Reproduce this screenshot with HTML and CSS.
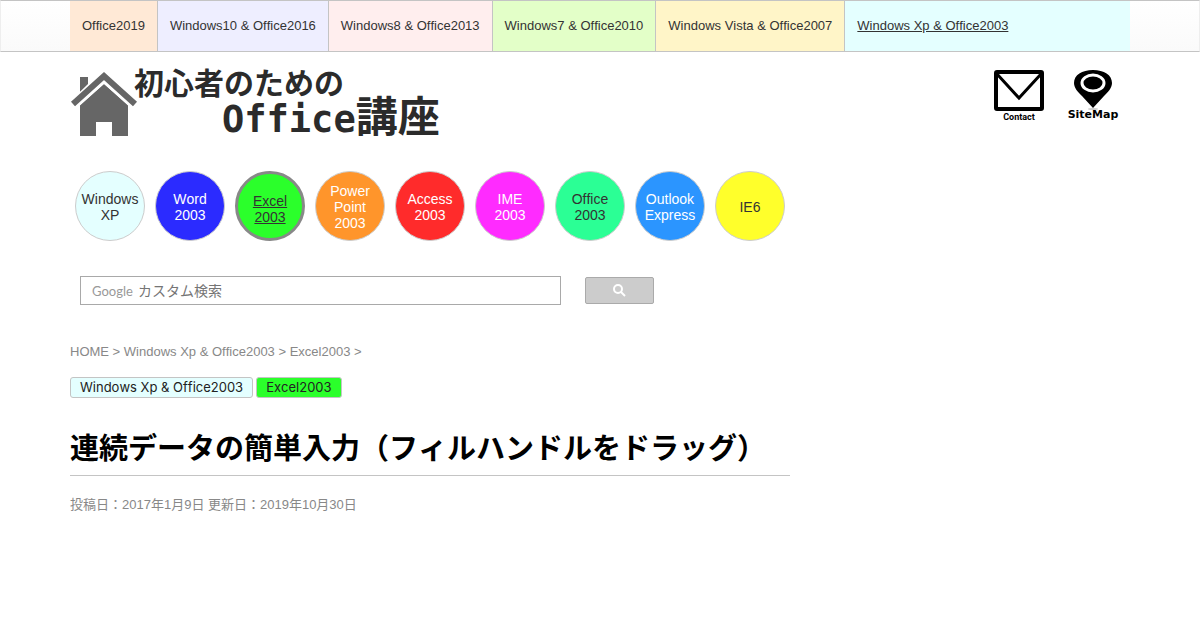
FILE: index.html
```html
<!DOCTYPE html>
<html lang="ja">
<head>
    <meta charset="UTF-8">
    <meta name="viewport" content="width=device-width, initial-scale=1.0">
    <title>連続データの簡単入力（フィルハンドルをドラッグ）</title>
    <link rel="stylesheet" href="styles.css">
</head>
<body>
    <nav class="topnav">
        <div class="wrap topnav-list">
            <a class="o2019" href="#">Office2019</a>
            <a class="o2016" href="#">Windows10 &amp; Office2016</a>
            <a class="o2013" href="#">Windows8 &amp; Office2013</a>
            <a class="o2010" href="#">Windows7 &amp; Office2010</a>
            <a class="o2007" href="#">Windows Vista &amp; Office2007</a>
            <a class="o2003 current" href="#">Windows Xp &amp; Office2003</a>
        </div>
    </nav>

    <div class="wrap">
        <header class="header">
            <a class="logo" href="#">
                <svg class="house" viewBox="0 0 68 68" width="68" height="68">
                    <path fill="#666" d="M10 7h8v7l-8 8zM10 35L34 14l24 21v31H42V52H26v14H10z"/>
                    <path fill="none" stroke="#fff" stroke-width="10" d="M3 35L34 7l31 28"/>
                    <path fill="none" stroke="#666" stroke-width="6" d="M3 34L34 6l31 28"/>
                </svg>
                <span class="logo-text">
                    <span class="logo-top">初心者のための</span>
                    <span class="logo-bottom">Office<span class="logo-kanji">講座</span></span>
                </span>
            </a>
            <div class="header-links">
                <a class="contact" href="#">
                    <svg viewBox="0 0 50 42" width="50" height="42">
                        <rect x="2" y="2" width="46" height="37" rx="1" fill="#fff" stroke="#000" stroke-width="4"/>
                        <path d="M3 4l22 24L47 4" fill="none" stroke="#000" stroke-width="3"/>
                    </svg>
                    <span>Contact</span>
                </a>
                <a class="sitemap" href="#">
                    <svg viewBox="0 0 38 40" width="38" height="40">
                        <ellipse cx="19" cy="39" rx="5" ry="1" fill="#ccc"/>
                        <path d="M19 0C8 0 0 5 0 13c0 5 4 9 8 13l11 12 11-12c4-4 8-8 8-13C38 5 30 0 19 0z"/>
                        <ellipse cx="19" cy="13" rx="11" ry="8" stroke="#fff" stroke-width="3"/>
                    </svg>
                    <span>SiteMap</span>
                </a>
            </div>
        </header>

        <main class="main">
            <nav class="circles">
                <a class="xp" href="#">Windows<br>XP</a>
                <a class="word" href="#">Word<br>2003</a>
                <a class="excel current" href="#">Excel<br>2003</a>
                <a class="ppt" href="#">Power<br>Point<br>2003</a>
                <a class="access" href="#">Access<br>2003</a>
                <a class="ime" href="#">IME<br>2003</a>
                <a class="office" href="#">Office<br>2003</a>
                <a class="outlook" href="#">Outlook<br>Express</a>
                <a class="ie" href="#">IE6</a>
            </nav>

            <form class="search">
                <div class="search-box">
                    <label class="google" for="q">Google</label>
                    <input id="q" type="text" placeholder="カスタム検索">
                </div>
                <button type="button" aria-label="検索">
                    <svg viewBox="0 0 13 13" width="13" height="13">
                        <circle cx="5" cy="5" r="4" fill="none" stroke="#fff" stroke-width="2"/>
                        <path d="M8 8l4 4" stroke="#fff" stroke-width="2"/>
                    </svg>
                </button>
            </form>

            <div class="breadcrumb">
                <a href="#">HOME</a> &gt; <a href="#">Windows Xp &amp; Office2003</a> &gt; <a href="#">Excel2003</a> &gt;
            </div>

            <div class="tags">
                <a class="xp" href="#">Windows Xp &amp; Office2003</a>
                <a class="excel" href="#">Excel2003</a>
            </div>

            <h1>連続データの簡単入力（フィルハンドルをドラッグ）</h1>
            <p class="date">投稿日：2017年1月9日 更新日：2019年10月30日</p>
        </main>
    </div>
</body>
</html>
```
FILE: styles.css
```css
* {
    box-sizing: border-box;
}
body {
    margin: 0;
    background: #fff;
    color: #333;
    font-family: "Liberation Sans", "Noto Sans CJK JP", sans-serif;
    font-size: 13px;
    line-height: 20px;
    font-kerning: none;
}
a {
    color: inherit;
    text-decoration: none;
}
svg {
    display: block;
}
.wrap {
    max-width: 1060px;
    margin: 0 auto;
}
.current {
    text-decoration: underline;
}

/* top navigation */
.topnav {
    border: 1px solid #c4c4c4;
    border-left-color: #eee;
    border-right-color: #eee;
    background: linear-gradient(#fff, #fafafa);
}
.topnav-list {
    display: flex;
}
.topnav a {
    padding: 15px 12px;
    border-right: 1px solid #c4c4c4;
    white-space: nowrap;
}
.topnav a:last-child {
    flex: 1;
    border-right: none;
}
.o2019 { background: #ffe9d6; }
.o2016 { background: #eeeeff; }
.o2013 { background: #ffeeee; }
.o2010 { background: #e3ffc8; }
.o2007 { background: #fff5c8; }
.o2003 { background: #e4ffff; }

/* header */
.header {
    display: flex;
    justify-content: space-between;
    padding-top: 18px;
}
.logo {
    display: flex;
    height: 68px;
    color: #2b2b2b;
    font-weight: bold;
}
.logo-text {
    display: flex;
    flex-direction: column;
    margin-left: -4px;
    font-family: "DejaVu Sans Mono", "Noto Sans CJK JP", monospace;
}
.logo-top {
    font-size: 30px;
    line-height: 28px;
}
.logo-bottom {
    display: flex;
    align-items: baseline;
    padding-left: 88px;
    font-size: 37px;
    line-height: 40px;
}
.logo-kanji {
    font-size: 42px;
}
.header-links {
    display: flex;
    gap: 24px;
    padding-right: 12px;
    color: #000;
}
.header-links a {
    display: flex;
    flex-direction: column;
    align-items: center;
    width: 50px;
    font-weight: bold;
    line-height: 10px;
}
.contact {
    font-family: Roboto, sans-serif;
    font-size: 9px;
}
.sitemap {
    font-family: "DejaVu Sans", sans-serif;
    font-size: 11px;
}

/* main column */
.main {
    max-width: 720px;
}
.circles {
    display: flex;
    gap: 10px;
    padding: 33px 5px 0;
}
.circles a {
    display: grid;
    place-content: center;
    width: 70px;
    height: 70px;
    padding-top: 2px;
    border: 1px solid #ccc;
    border-radius: 50%;
    font-size: 14px;
    line-height: 16px;
    text-align: center;
}
.circles .current {
    padding-top: 6px;
    border: 3px solid #888;
}
.xp { background: #e4ffff; }
.word { background: #2b2bff; color: #fff; }
.excel { background: #2bff2b; }
.ppt { background: #ff952b; color: #fff; }
.access { background: #ff2b2b; color: #fff; }
.ime { background: #ff2bff; color: #fff; }
.office { background: #2bff95; }
.outlook { background: #2b95ff; color: #fff; }
.ie { background: #ffff2b; }

/* search */
.search {
    display: flex;
    align-items: center;
    gap: 24px;
    padding: 35px 10px 0;
}
.search-box {
    position: relative;
    width: 481px;
}
.search input {
    display: block;
    width: 100%;
    height: 29px;
    padding: 0 10px 0 57px;
    border: 1px solid #a9a9a9;
    font-family: inherit;
    font-size: 14px;
}
.search input::placeholder {
    color: #757575;
}
.google {
    position: absolute;
    left: 12px;
    top: 5px;
    color: #999;
    font-family: Lato, sans-serif;
    font-size: 13px;
}
.search button {
    display: flex;
    align-items: center;
    justify-content: center;
    width: 69px;
    height: 27px;
    padding: 0;
    border: 1px solid #aaa;
    border-radius: 2px;
    background: #ccc;
}

.breadcrumb {
    margin-top: 37px;
    color: #888;
}
.tags {
    display: flex;
    gap: 3px;
    margin-top: 15px;
}
.tags a {
    padding: 0 9px;
    border: 1px solid #c4c4c4;
    border-radius: 3px;
    color: #222;
    font-family: Inter, sans-serif;
    font-size: 13px;
    line-height: 19px;
}
h1 {
    margin: 31px 0 0;
    padding-bottom: 6px;
    border-bottom: 1px solid #c4c4c4;
    color: #000;
    font-size: 29px;
    line-height: 40px;
}
.date {
    margin: 19px 0 0;
    color: #888;
}
```
